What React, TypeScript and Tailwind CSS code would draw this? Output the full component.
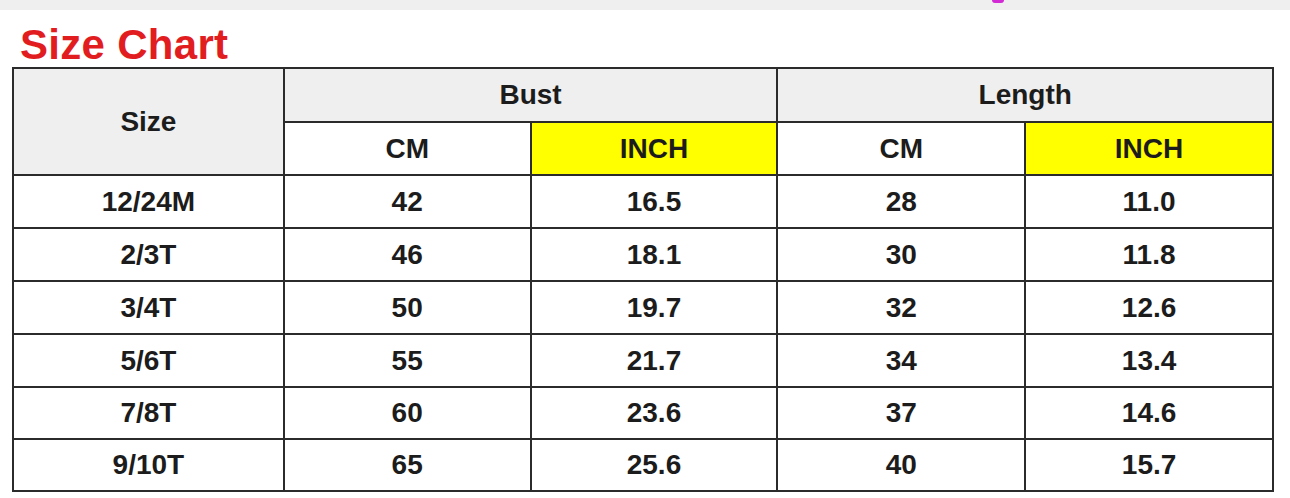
import React from 'react';

const rows = [
  ['12/24M', '42', '16.5', '28', '11.0'],
  ['2/3T', '46', '18.1', '30', '11.8'],
  ['3/4T', '50', '19.7', '32', '12.6'],
  ['5/6T', '55', '21.7', '34', '13.4'],
  ['7/8T', '60', '23.6', '37', '14.6'],
  ['9/10T', '65', '25.6', '40', '15.7'],
];

const cell = 'border-2 border-[#2b2b2b] text-center align-middle p-0';

export default function App() {
  return (
    <div className="w-[1290px] h-[498px] bg-white overflow-hidden font-['Liberation_Sans',Arial,sans-serif]">
      <div className="h-[10px] bg-[#efefef] flex">
        <span className="ml-[992px] w-[12px] h-[3px] bg-[#d22ad4] rounded-b-full" />
      </div>
      <h1 className="mt-[14px] ml-[20px] h-[42px] text-[42px] leading-[42px] font-bold text-[#e21d1f] tracking-[0.3px]">
        Size Chart
      </h1>
      <table className="mt-[1px] ml-[12px] w-[1262px] border-collapse text-[28px] font-bold text-[#1c1c1c]">
        <colgroup>
          <col className="w-[271px]" />
          <col className="w-[247px]" />
          <col className="w-[247px]" />
          <col className="w-[248px]" />
          <col className="w-[248px]" />
        </colgroup>
        <thead>
          <tr className="h-[54px]">
            <th rowSpan={2} className={`${cell} bg-[#efefef]`}>Size</th>
            <th colSpan={2} className={`${cell} bg-[#efefef]`}>Bust</th>
            <th colSpan={2} className={`${cell} bg-[#efefef]`}>Length</th>
          </tr>
          <tr className="h-[53px]">
            <th className={`${cell} bg-white`}>CM</th>
            <th className={`${cell} bg-[#ffff00]`}>INCH</th>
            <th className={`${cell} bg-white`}>CM</th>
            <th className={`${cell} bg-[#ffff00]`}>INCH</th>
          </tr>
        </thead>
        <tbody>
          {rows.map((r, ri) => (
            <tr key={r[0]} className={ri >= 4 ? 'h-[52px]' : 'h-[53px]'}>
              {r.map((v, i) => (
                <td key={i} className={`${cell} bg-white`}>{v}</td>
              ))}
            </tr>
          ))}
        </tbody>
      </table>
    </div>
  );
}
